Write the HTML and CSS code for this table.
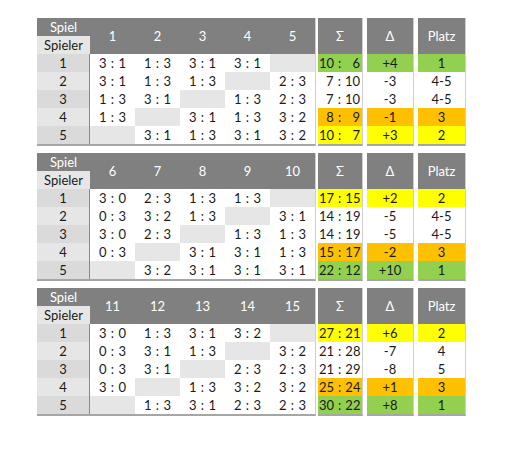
FILE: index.html
```html
<!DOCTYPE html>
<html>
<head>
<meta charset="utf-8">
<link rel="stylesheet" href="styles.css">
</head>
<body>
<div class="page">

  <section class="block">
    <div class="main">
      <div class="hd-spiel">Spiel</div>
      <div class="hd-game">1</div><div class="hd-game">2</div><div class="hd-game">3</div><div class="hd-game">4</div><div class="hd-game">5</div>
      <div class="hd-spieler">Spieler</div>
      <div class="pl odd">1</div><div class="sc">3 : 1</div><div class="sc">1 : 3</div><div class="sc">3 : 1</div><div class="sc">3 : 1</div><div class="sc na"></div>
      <div class="pl even">2</div><div class="sc">3 : 1</div><div class="sc">1 : 3</div><div class="sc">1 : 3</div><div class="sc na"></div><div class="sc">2 : 3</div>
      <div class="pl odd">3</div><div class="sc">1 : 3</div><div class="sc">3 : 1</div><div class="sc na"></div><div class="sc">1 : 3</div><div class="sc">2 : 3</div>
      <div class="pl even">4</div><div class="sc">1 : 3</div><div class="sc na"></div><div class="sc">3 : 1</div><div class="sc">1 : 3</div><div class="sc">3 : 2</div>
      <div class="pl odd">5</div><div class="sc na"></div><div class="sc">3 : 1</div><div class="sc">1 : 3</div><div class="sc">3 : 1</div><div class="sc">3 : 2</div>
    </div>
    <div class="side sum">
      <div class="sh">Σ</div>
      <div class="sv green"><span>10</span><span>:</span><span>6</span></div>
      <div class="sv"><span>7</span><span>:</span><span>10</span></div>
      <div class="sv"><span>7</span><span>:</span><span>10</span></div>
      <div class="sv orange"><span>8</span><span>:</span><span>9</span></div>
      <div class="sv yellow"><span>10</span><span>:</span><span>7</span></div>
    </div>
    <div class="side delta">
      <div class="sh">Δ</div>
      <div class="cv green">+4</div>
      <div class="cv">-3</div>
      <div class="cv">-3</div>
      <div class="cv orange">-1</div>
      <div class="cv yellow">+3</div>
    </div>
    <div class="side platz">
      <div class="sh">Platz</div>
      <div class="cv green">1</div>
      <div class="cv">4-5</div>
      <div class="cv">4-5</div>
      <div class="cv orange">3</div>
      <div class="cv yellow">2</div>
    </div>
  </section>

  <section class="block">
    <div class="main">
      <div class="hd-spiel">Spiel</div>
      <div class="hd-game">6</div><div class="hd-game">7</div><div class="hd-game">8</div><div class="hd-game">9</div><div class="hd-game">10</div>
      <div class="hd-spieler">Spieler</div>
      <div class="pl odd">1</div><div class="sc">3 : 0</div><div class="sc">2 : 3</div><div class="sc">1 : 3</div><div class="sc">1 : 3</div><div class="sc na"></div>
      <div class="pl even">2</div><div class="sc">0 : 3</div><div class="sc">3 : 2</div><div class="sc">1 : 3</div><div class="sc na"></div><div class="sc">3 : 1</div>
      <div class="pl odd">3</div><div class="sc">3 : 0</div><div class="sc">2 : 3</div><div class="sc na"></div><div class="sc">1 : 3</div><div class="sc">1 : 3</div>
      <div class="pl even">4</div><div class="sc">0 : 3</div><div class="sc na"></div><div class="sc">3 : 1</div><div class="sc">3 : 1</div><div class="sc">1 : 3</div>
      <div class="pl odd">5</div><div class="sc na"></div><div class="sc">3 : 2</div><div class="sc">3 : 1</div><div class="sc">3 : 1</div><div class="sc">3 : 1</div>
    </div>
    <div class="side sum">
      <div class="sh">Σ</div>
      <div class="sv yellow"><span>17</span><span>:</span><span>15</span></div>
      <div class="sv"><span>14</span><span>:</span><span>19</span></div>
      <div class="sv"><span>14</span><span>:</span><span>19</span></div>
      <div class="sv orange"><span>15</span><span>:</span><span>17</span></div>
      <div class="sv green"><span>22</span><span>:</span><span>12</span></div>
    </div>
    <div class="side delta">
      <div class="sh">Δ</div>
      <div class="cv yellow">+2</div>
      <div class="cv">-5</div>
      <div class="cv">-5</div>
      <div class="cv orange">-2</div>
      <div class="cv green">+10</div>
    </div>
    <div class="side platz">
      <div class="sh">Platz</div>
      <div class="cv yellow">2</div>
      <div class="cv">4-5</div>
      <div class="cv">4-5</div>
      <div class="cv orange">3</div>
      <div class="cv green">1</div>
    </div>
  </section>

  <section class="block">
    <div class="main">
      <div class="hd-spiel">Spiel</div>
      <div class="hd-game">11</div><div class="hd-game">12</div><div class="hd-game">13</div><div class="hd-game">14</div><div class="hd-game">15</div>
      <div class="hd-spieler">Spieler</div>
      <div class="pl odd">1</div><div class="sc">3 : 0</div><div class="sc">1 : 3</div><div class="sc">3 : 1</div><div class="sc">3 : 2</div><div class="sc na"></div>
      <div class="pl even">2</div><div class="sc">0 : 3</div><div class="sc">3 : 1</div><div class="sc">1 : 3</div><div class="sc na"></div><div class="sc">3 : 2</div>
      <div class="pl odd">3</div><div class="sc">0 : 3</div><div class="sc">3 : 1</div><div class="sc na"></div><div class="sc">2 : 3</div><div class="sc">2 : 3</div>
      <div class="pl even">4</div><div class="sc">3 : 0</div><div class="sc na"></div><div class="sc">1 : 3</div><div class="sc">3 : 2</div><div class="sc">3 : 2</div>
      <div class="pl odd">5</div><div class="sc na"></div><div class="sc">1 : 3</div><div class="sc">3 : 1</div><div class="sc">2 : 3</div><div class="sc">2 : 3</div>
    </div>
    <div class="side sum">
      <div class="sh">Σ</div>
      <div class="sv yellow"><span>27</span><span>:</span><span>21</span></div>
      <div class="sv"><span>21</span><span>:</span><span>28</span></div>
      <div class="sv"><span>21</span><span>:</span><span>29</span></div>
      <div class="sv orange"><span>25</span><span>:</span><span>24</span></div>
      <div class="sv green"><span>30</span><span>:</span><span>22</span></div>
    </div>
    <div class="side delta">
      <div class="sh">Δ</div>
      <div class="cv yellow">+6</div>
      <div class="cv">-7</div>
      <div class="cv">-8</div>
      <div class="cv orange">+1</div>
      <div class="cv green">+8</div>
    </div>
    <div class="side platz">
      <div class="sh">Platz</div>
      <div class="cv yellow">2</div>
      <div class="cv">4</div>
      <div class="cv">5</div>
      <div class="cv orange">3</div>
      <div class="cv green">1</div>
    </div>
  </section>

</div>
</body>
</html>
```
FILE: styles.css
```css
* { box-sizing: border-box; }
html, body { margin: 0; padding: 0; background: #ffffff; }
body {
  font-family: "Lato", "Open Sans", "DejaVu Sans", sans-serif;
  font-size: 13px;
  color: #1a1a1a;
}
.page {
  padding: 18px 0 0 37px;
  display: flex;
  flex-direction: column;
  gap: 7px;
}
.block {
  display: flex;
  align-items: flex-start;
}
.main {
  display: grid;
  grid-template-columns: 53px repeat(5, 45px);
  grid-template-rows: 18px 18px repeat(5, 18px);
  width: 279px;
  border-right: 1px solid #cfcfcf;
  border-bottom: 2px solid #a6a6a6;
}
.main > div {
  display: flex;
  align-items: center;
  justify-content: center;
  line-height: 1;
}
.hd-spiel {
  grid-column: 1;
  grid-row: 1;
  background: #808080;
  color: #ffffff;
}
.hd-spieler {
  grid-column: 1;
  grid-row: 2;
  background: #e6e6e6;
  color: #1a1a1a;
}
.hd-game {
  grid-row: 1 / span 2;
  background: #808080;
  color: #ffffff;
}
.pl {
  grid-column: 1;
  border-right: 1px solid #8a8a8a;
}
.pl.odd { background: #dadada; }
.pl.even { background: #e6e6e6; }
.sc { background: #ffffff; word-spacing: 1px; }
.sc.na { background: #e6e6e6; }

.side {
  display: flex;
  flex-direction: column;
  border-right: 1px solid #cfcfcf;
  border-bottom: 2px solid #a6a6a6;
}
.sum { width: 45px; margin-left: 2px; }
.delta { width: 47px; margin-left: 4px; }
.platz { width: 48px; margin-left: 4px; }
.sh {
  height: 36px;
  background: #808080;
  color: #ffffff;
  display: flex;
  align-items: center;
  justify-content: center;
}
.cv {
  height: 18px;
  display: flex;
  align-items: center;
  justify-content: center;
  line-height: 1;
}
.sv {
  height: 18px;
  display: grid;
  grid-template-columns: 1fr auto 1fr;
  align-items: center;
  column-gap: 4px;
  padding: 0 2px 0 1px;
  line-height: 1;
}
.sv span { text-align: right; }
.green { background: #92d050; }
.yellow { background: #ffff00; }
.orange { background: #ffc000; }
```
